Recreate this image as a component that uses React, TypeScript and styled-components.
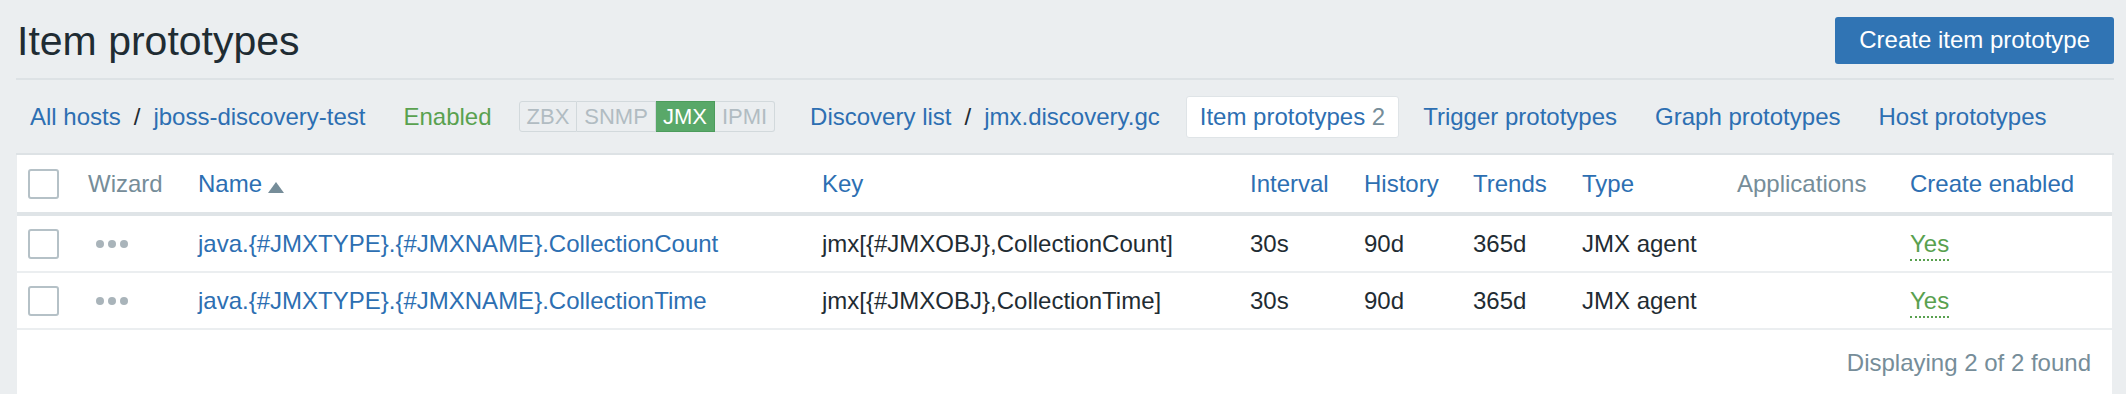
import styled, { createGlobalStyle } from 'styled-components';

const GlobalStyle = createGlobalStyle`
  body {
    margin: 0;
    background-color: #ebeef0;
    font-family: "Liberation Sans", Arial, sans-serif;
    color: #1f2c33;
  }
`;

const Page = styled.div`
  padding: 0 12px 0 16px;
`;

const Header = styled.header`
  display: flex;
  align-items: center;
  justify-content: space-between;
  height: 78px;
  border-bottom: 2px solid #dde2e5;
`;

const Title = styled.h1`
  margin: 5px 0 0 1px;
  font-size: 41px;
  font-weight: 400;
  line-height: 41px;
  color: #1f2c33;
`;

const PrimaryButton = styled.button`
  height: 47px;
  padding: 0 24px;
  margin-top: 2px;
  border: none;
  border-radius: 3px;
  background-color: #3074b4;
  color: #fff;
  font-family: inherit;
  font-size: 24px;
`;

const Nav = styled.nav`
  display: flex;
  align-items: center;
  height: 73px;
  padding-left: 14px;
  border-bottom: 2px solid #dde2e5;
  font-size: 24px;
  line-height: 24px;
`;

const NavGroup = styled.div<{ $space?: number }>`
  display: flex;
  align-items: center;
  margin-left: ${(p) => p.$space ?? 0}px;
`;

const Link = styled.a`
  color: #2d6fb2;
  text-decoration: none;
  white-space: nowrap;
`;

const Slash = styled.span`
  padding: 0 13px;
  color: #1f2c33;
`;

const StatusText = styled.span`
  color: #59a14f;
`;

const BadgeGroup = styled.div`
  display: flex;
  height: 31px;
`;

const Badge = styled.span<{ $active?: boolean }>`
  display: flex;
  align-items: center;
  padding: 0 7px;
  font-size: 22px;
  border: 1px solid ${(p) => (p.$active ? '#4c9c5c' : '#d2d9dc')};
  border-left-width: 0;
  background-color: ${(p) => (p.$active ? '#59a869' : 'transparent')};
  color: ${(p) => (p.$active ? '#fff' : '#b1bcc2')};

  &:first-child {
    border-left-width: 1px;
    border-radius: 3px 0 0 3px;
  }
  &:last-child {
    border-radius: 0 3px 3px 0;
  }
`;

const Tabs = styled.div`
  display: flex;
  gap: 10px;
  margin-left: 26px;
`;

const Tab = styled.a<{ $active?: boolean }>`
  padding: 8px 13px;
  border: 1px solid ${(p) => (p.$active ? '#dfe4e7' : 'transparent')};
  border-radius: 3px;
  background-color: ${(p) => (p.$active ? '#fff' : 'transparent')};
  color: #2d6fb2;
  text-decoration: none;
  white-space: nowrap;
`;

const Count = styled.span`
  color: #768d99;
`;

const TableBox = styled.div`
  margin: 0 2px 0 1px;
  background-color: #fff;
  min-height: 239px;
`;

const Table = styled.table`
  width: 100%;
  table-layout: fixed;
  border-collapse: separate;
  border-spacing: 0;
  font-size: 24px;
  line-height: 24px;
`;

const HeadCell = styled.th<{ $muted?: boolean }>`
  height: 57px;
  padding: 0 10px;
  border-bottom: 4px solid #dfe4e7;
  text-align: left;
  font-weight: 400;
  white-space: nowrap;
  color: ${(p) => (p.$muted ? '#768d99' : '#2d6fb2')};
`;

const Cell = styled.td`
  height: 55px;
  padding: 0 10px;
  border-bottom: 2px solid #ebeef0;
  white-space: nowrap;
  color: #1f2c33;
`;

const Checkbox = styled.span`
  display: block;
  width: 27px;
  height: 26px;
  margin-left: 1px;
  border: 2px solid #b5c1c7;
  border-radius: 3px;
  background-color: #fff;
`;

const SortArrow = styled.svg`
  margin-left: 6px;
  vertical-align: -1px;
`;

const ToggleLink = styled.a`
  color: #59a14f;
  text-decoration: none;
  padding-bottom: 2px;
  border-bottom: 2px dotted #59a14f;
`;

const Footer = styled.div`
  padding: 21px 21px 20px;
  text-align: right;
  font-size: 24px;
  line-height: 24px;
  color: #768d99;
`;

const columns = [61, 110, 624, 428, 114, 109, 109, 155, 173, 212];

const rows = [
  { name: 'java.{#JMXTYPE}.{#JMXNAME}.CollectionCount', key: 'jmx[{#JMXOBJ},CollectionCount]' },
  { name: 'java.{#JMXTYPE}.{#JMXNAME}.CollectionTime', key: 'jmx[{#JMXOBJ},CollectionTime]' },
];

function Dots() {
  return (
    <svg width="32" height="8" viewBox="0 0 32 8" style={{ display: 'block', marginLeft: 8 }}>
      <circle cx="4" cy="4" r="4" fill="#a9b4ba" />
      <circle cx="16" cy="4" r="4" fill="#a9b4ba" />
      <circle cx="28" cy="4" r="4" fill="#a9b4ba" />
    </svg>
  );
}

export default function App() {
  return (
    <Page>
      <GlobalStyle />
      <Header>
        <Title>Item prototypes</Title>
        <PrimaryButton>Create item prototype</PrimaryButton>
      </Header>

      <Nav>
        <NavGroup>
          <Link>All hosts</Link>
          <Slash>/</Slash>
          <Link>jboss-discovery-test</Link>
        </NavGroup>
        <NavGroup $space={38}>
          <StatusText>Enabled</StatusText>
        </NavGroup>
        <NavGroup $space={27}>
          <BadgeGroup>
            <Badge>ZBX</Badge>
            <Badge>SNMP</Badge>
            <Badge $active>JMX</Badge>
            <Badge>IPMI</Badge>
          </BadgeGroup>
        </NavGroup>
        <NavGroup $space={35}>
          <Link>Discovery list</Link>
          <Slash>/</Slash>
          <Link>jmx.discovery.gc</Link>
        </NavGroup>
        <Tabs>
          <Tab $active>
            Item prototypes <Count>2</Count>
          </Tab>
          <Tab>Trigger prototypes</Tab>
          <Tab>Graph prototypes</Tab>
          <Tab>Host prototypes</Tab>
        </Tabs>
      </Nav>

      <TableBox>
        <Table>
          <colgroup>
            {columns.map((w, i) => (
              <col key={i} style={{ width: w }} />
            ))}
          </colgroup>
          <thead>
            <tr>
              <HeadCell>
                <Checkbox />
              </HeadCell>
              <HeadCell $muted>Wizard</HeadCell>
              <HeadCell>
                Name
                <SortArrow width="16" height="11" viewBox="0 0 16 11">
                  <polygon points="8,0 16,11 0,11" fill="#768d99" />
                </SortArrow>
              </HeadCell>
              <HeadCell>Key</HeadCell>
              <HeadCell>Interval</HeadCell>
              <HeadCell>History</HeadCell>
              <HeadCell>Trends</HeadCell>
              <HeadCell>Type</HeadCell>
              <HeadCell $muted>Applications</HeadCell>
              <HeadCell>Create enabled</HeadCell>
            </tr>
          </thead>
          <tbody>
            {rows.map((r) => (
              <tr key={r.name}>
                <Cell>
                  <Checkbox />
                </Cell>
                <Cell>
                  <Dots />
                </Cell>
                <Cell>
                  <Link>{r.name}</Link>
                </Cell>
                <Cell>{r.key}</Cell>
                <Cell>30s</Cell>
                <Cell>90d</Cell>
                <Cell>365d</Cell>
                <Cell>JMX agent</Cell>
                <Cell></Cell>
                <Cell>
                  <ToggleLink>Yes</ToggleLink>
                </Cell>
              </tr>
            ))}
          </tbody>
        </Table>
        <Footer>Displaying 2 of 2 found</Footer>
      </TableBox>
    </Page>
  );
}
